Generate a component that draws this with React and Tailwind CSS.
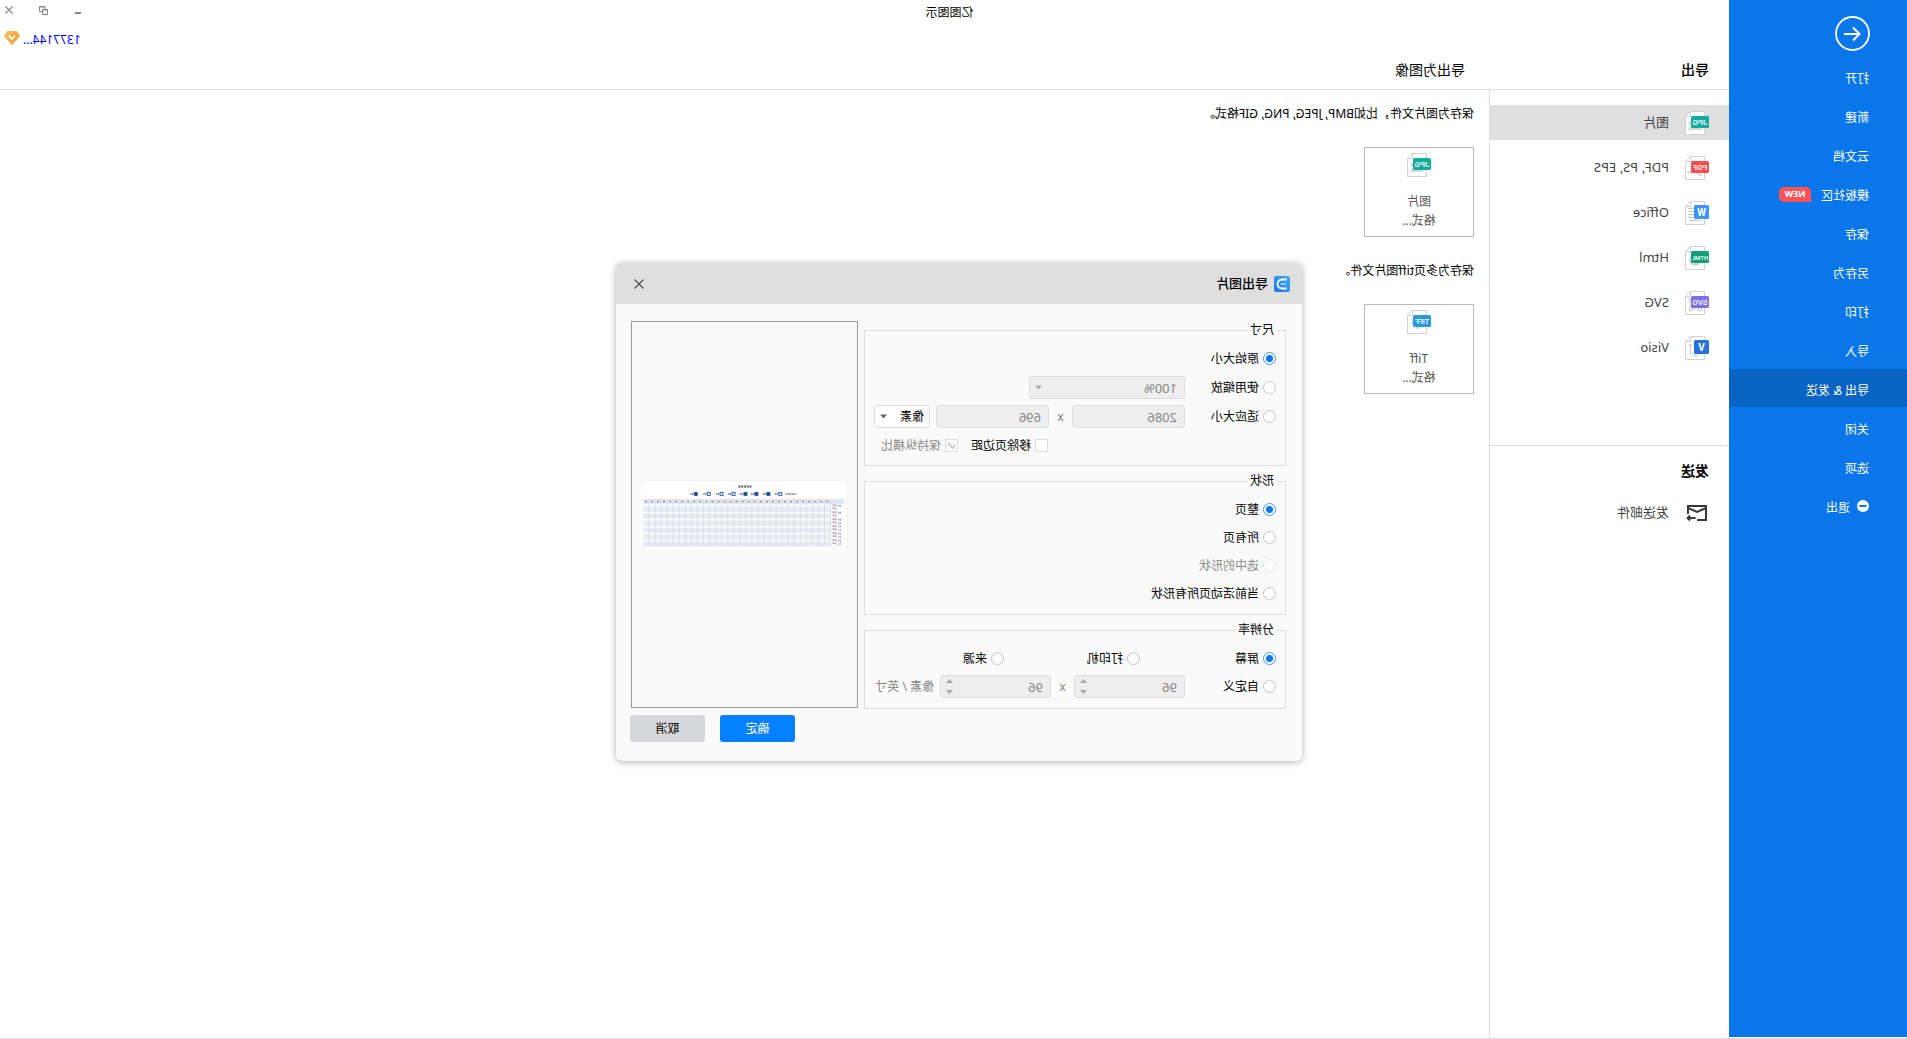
import React, { useState } from "react";
import clsx from "clsx";

const navItems = [
  { id: "open", name: "打开" },
  { id: "new", name: "新建" },
  { id: "cloud", name: "云文档" },
  { id: "community", name: "模板社区", badge: "NEW" },
  { id: "save", name: "保存" },
  { id: "saveAs", name: "另存为" },
  { id: "print", name: "打印" },
  { id: "import", name: "导入" },
  { id: "export", name: "导出 & 发送" },
  { id: "close", name: "关闭" },
  { id: "options", name: "选项" },
  { id: "exit", name: "退出", icon: true },
];

const exportTypes = [
  { id: "jpg", name: "图片" },
  { id: "pdf", name: "PDF, PS, EPS" },
  { id: "word", name: "Office" },
  { id: "html", name: "Html" },
  { id: "svg", name: "SVG" },
  { id: "visio", name: "Visio" },
];

const fileBadges = {
  jpg: { label: "JPG", color: "#12ab9d", size: 8 },
  pdf: { label: "PDF", color: "#ff4c4f", size: 8 },
  html: { label: "HTML", color: "#12a078", size: 6 },
  svg: { label: "SVG", color: "#7f6fe8", size: 8 },
  tiff: { label: "TIFF", color: "#2b99d8", size: 7 },
  word: { label: "W", color: "#3b94ff", size: 10, square: true },
  visio: { label: "V", color: "#2672d9", size: 10, square: true },
};

const FileIcon = ({ type }) => {
  const badge = fileBadges[type];
  return (
    <svg width="24" height="24" viewBox="0 0 24 24" className="shrink-0" aria-hidden="true">
      <path d="M4.5.5H18.500l5 5v18h-19z" fill="#fff" stroke="#d2d2d2" />
      <path d="M18.500.5v5h5" fill="none" stroke="#d2d2d2" />
      {type === "jpg" && (
        <g fill="#d6d6d6">
          <circle cx="18.500" cy="12" r="2" />
          <path d="M7 19l4-6 4 3 3-2 3 5z" />
        </g>
      )}
      {type === "pdf" && (
        <path d="M7 19c3 1 5-1 6-4 3 2 6 3 9 1-3 0-5-1-7-3-2 2-5 4-8 6z" fill="#d6d6d6" stroke="#d6d6d6" />
      )}
      {type === "word" && (
        <path d="M14 7.500h7M14 10.500h7M14 13.500h7M14 16.500h7M8 19.500h12" stroke="#c9c9c9" />
      )}
      {type === "html" && <circle cx="14" cy="14" r="6" fill="#d6d6d6" />}
      {type === "svg" && (
        <path d="M7.500 16.500h3v3h-3zM16.500 16.500h3v3h-3zM16.500 7.500h3v3h-3zM10.500 18h6M18 10.500v6" fill="none" stroke="#c9c9c9" />
      )}
      {type === "visio" && (
        <g fill="#d2d2d2" stroke="#d2d2d2">
          <path d="M18.500 8l1.500 1.500-1.500 1.500-1.500-1.500zM12 19h3v1h-3z" />
          <path d="M18.500 10v8h-3" fill="none" />
        </g>
      )}
      {type === "tiff" && (
        <g fill="#d6d6d6">
          <circle cx="14" cy="13" r="4.500" />
          <path d="M12.500 7h3v12h-3zM8 11.500h12v3H8z" />
          <path d="M12.500 7h3v12h-3z" transform="rotate(45 14 13)" />
        </g>
      )}
      {badge.square ? (
        <rect y="4" x="0" width="15" height="14" rx="1.500" fill={badge.color} />
      ) : (
        <rect y="5" x="0" width="18" height="12" rx="1.500" fill={badge.color} />
      )}
      <text
        x={badge.square ? 7.5 : 9}
        y={badge.square ? 14.5 : 13.5}
        fontSize={badge.size}
        fontWeight={badge.square ? 700 : 500}
        fontFamily="Roboto, sans-serif"
        textAnchor="middle"
        fill="#fff"
      >
        {badge.label}
      </text>
    </svg>
  );
};

const previewIcons = [
  { x: 68, filled: false },
  { x: 80, filled: true },
  { x: 92, filled: true },
  { x: 103, filled: true },
  { x: 115, filled: false },
  { x: 127, filled: false },
  { x: 140, filled: false },
  { x: 153, filled: true },
];

// Thumbnail of the attendance sheet that will be exported
const SheetPreview = () => (
  <svg viewBox="0 0 208 69" className="w-full" role="img" aria-label="预览">
    <rect width="208" height="69" fill="#fff" />
    <path d="M.5 69V.5H208" fill="none" stroke="#f2f2f2" />
    <path d="M97 6.500h14" stroke="#77777f" strokeWidth="2.400" strokeDasharray="2 .8" />
    <path d="M52 14h11" stroke="#8a8a98" strokeWidth="1.600" strokeDasharray="2 .5" />
    {previewIcons.map((icon) => (
      <g key={icon.x}>
        <rect
          x={icon.x - 1.5}
          y="12.500"
          width="3"
          height="3"
          fill={icon.filled ? "#243a70" : "#fff"}
          stroke="#2f62b5"
        />
        <path d={`M${icon.x + 2.500} 14h3`} stroke="#6a6a78" strokeWidth="1.600" strokeDasharray="1.300 .4" />
      </g>
    ))}
    <rect x="4" y="19" width="202" height="5.400" fill="#e3e8f5" />
    {[0, 1, 2, 3, 4, 5].map((row) => (
      <g key={row}>
        <rect x="17" y={26.8 + row * 7} width="189" height="4.600" fill="#e7ebf5" />
        <path d={`M7 ${26 + row * 7}h3`} stroke="#a29dc4" strokeWidth="1.600" strokeDasharray="1.200 .4" />
        {row > 1 && <path d={`M7 ${29.3 + row * 7}h3`} stroke="#a29dc4" strokeWidth="1.600" strokeDasharray="1.200 .4" />}
        <path d={`M12 ${25.5 + row * 7}h4M12 ${28.5 + row * 7}h4`} stroke="#b5a8b5" strokeWidth="1.800" strokeDasharray="1.600 .4" />
        <path d={`M4 ${31.400 + row * 7}h202`} stroke="#dedfe6" strokeWidth=".5" />
      </g>
    ))}
    {Array.from({ length: 31 }, (_, i) => (
      <g key={i}>
        <path d={`M${17.500 + i * 6.08} 19v47.400`} stroke="#d8d9df" strokeWidth=".8" />
        <path d={`M${19.700 + i * 6.08} 21.700h2`} stroke="#8b8bad" strokeWidth="1.500" />
      </g>
    ))}
    <path d="M11.500 24v42.400M4 19l13 5" stroke="#d8d9df" strokeWidth=".8" />
  </svg>
);

const Radio = ({ label, name, value, current, onChange, disabled }) => (
  <label
    className={clsx(
      "flex h-[23px] items-center gap-1 whitespace-nowrap",
      disabled ? "text-[#8a8a8a]" : "text-black"
    )}
  >
    <input
      type="radio"
      name={name}
      value={value}
      checked={current === value}
      disabled={disabled}
      onChange={() => onChange(value)}
      className="h-[13px] w-[13px] shrink-0 appearance-none rounded-full border border-[#c4c4c4] bg-white checked:border-[#3d93ee] checked:bg-[radial-gradient(circle,#0a76ec_3px,#ffffff_4px)] disabled:border-[#e4e4e4]"
    />
    {label}
  </label>
);

const Group = ({ title, children, className }) => (
  <fieldset className={clsx("min-w-0 border border-[#dcdcde] px-[9px] pt-2", className)}>
    <legend className="px-0.5 leading-[18px]">{title}</legend>
    {children}
  </fieldset>
);

const DropArrow = ({ className }) => (
  <svg width="7" height="5" viewBox="0 0 7 5" className={clsx("pointer-events-none absolute top-[9px] right-1.5", className)}>
    <path d="M0 .5h7L3.500 4.500z" fill="currentColor" />
  </svg>
);

const fieldClass =
  "h-[23px] w-full appearance-none rounded-[3px] border border-[#dcdcde] bg-[#eeeeee] px-[7px] text-[13px] leading-5 text-[#868686] opacity-100 outline-none";

const SpinBox = ({ label, value }) => (
  <div className="relative w-[111px]">
    <input type="number" aria-label={label} defaultValue={value} disabled className={clsx(fieldClass, "[&::-webkit-inner-spin-button]:appearance-none")} />
    <svg width="7" height="15" viewBox="0 0 7 15" className="pointer-events-none absolute top-1 right-1.5 text-[#a8a8a8]">
      <path d="M0 4L3.500 0 7 4zM0 11h7l-3.500 4z" fill="currentColor" />
    </svg>
  </div>
);

const ExportDialog = () => {
  const [size, setSize] = useState("original");
  const [shape, setShape] = useState("page");
  const [dpi, setDpi] = useState("screen");

  return (
    <div
      role="dialog"
      aria-labelledby="dialog-title"
      className="w-[686px] rounded-md bg-[#fafafa] text-xs shadow-[0_1px_7px_rgba(0,0,0,0.32)]"
    >
      <div className="flex h-[41px] items-center rounded-t-md bg-[#dfdfdf] px-3">
        <svg width="16" height="16" viewBox="0 0 16 16" aria-hidden="true">
          <defs>
            <linearGradient id="logo" x1="0" y1="0" x2="1" y2="1">
              <stop offset="0" stopColor="#4aa8ff" />
              <stop offset="1" stopColor="#1676f5" />
            </linearGradient>
          </defs>
          <rect width="16" height="16" rx="2" fill="url(#logo)" />
          <path d="M3.500 3.500h4.300c2.900 0 4.700 2 4.700 4.500s-1.800 4.500-4.700 4.500H3.500" fill="none" stroke="#fff" strokeWidth="1.800" />
          <path d="M4 8h5.500" stroke="#b9dcff" strokeWidth="1.500" />
        </svg>
        <h2 id="dialog-title" className="ml-1.5 text-[13px] font-medium">导出图片</h2>
        <button type="button" aria-label="关闭" className="mr-1.5 ml-auto">
          <svg width="10" height="10" viewBox="0 0 10 10">
            <path d="M.5.5l9 9M9.500.5l-9 9" stroke="#444" strokeWidth="1.100" />
          </svg>
        </button>
      </div>

      <div className="flex gap-1.5 pt-[17px] pr-[15px] pl-4">
        <div className="flex flex-1 flex-col gap-1.5">
          <Group title="尺寸" className="pb-2">
            <div className="grid grid-cols-[91px_1fr] gap-y-1.5">
              <div className="col-span-2">
                <Radio label="原始大小" name="size" value="original" current={size} onChange={setSize} />
              </div>
              <Radio label="使用缩放" name="size" value="scale" current={size} onChange={setSize} />
              <div className="relative w-[156px]">
                <select aria-label="缩放" disabled className={fieldClass}>
                  <option>100%</option>
                </select>
                <DropArrow className="text-[#a8a8a8]" />
              </div>
              <Radio label="适应大小" name="size" value="fit" current={size} onChange={setSize} />
              <div className="flex items-center">
                <input type="text" aria-label="宽度" defaultValue="2086" disabled className={clsx(fieldClass, "max-w-[113px]")} />
                <span className="w-[23px] shrink-0 text-center text-[#777]">x</span>
                <input type="text" aria-label="高度" defaultValue="696" disabled className={clsx(fieldClass, "max-w-[113px]")} />
                <div className="relative ml-1.5 w-14 shrink-0">
                  <select
                    aria-label="单位"
                    className="h-[23px] w-full appearance-none rounded-[3px] border border-[#dcdcde] bg-white pl-[5px] text-xs outline-none"
                  >
                    <option>像素</option>
                    <option>英寸</option>
                  </select>
                  <DropArrow className="text-[#666]" />
                </div>
              </div>
              <div className="col-span-2 flex h-[23px] items-center justify-end gap-[13px] pr-[7px]">
                <label className="flex items-center gap-1">
                  <input type="checkbox" className="h-[13px] w-[13px] appearance-none border border-[#dcdcde] bg-white" />
                  移除页边距
                </label>
                <label className="relative flex items-center gap-1 text-[#8a8a8a]">
                  <input type="checkbox" defaultChecked disabled className="h-[13px] w-[13px] appearance-none border border-[#dcdcde] bg-[#fafafa]" />
                  <svg width="13" height="13" viewBox="0 0 13 13" className="pointer-events-none absolute left-0">
                    <path d="M3 6l2.500 3L10 3.500" fill="none" stroke="#c4c4c4" strokeWidth="1.500" />
                  </svg>
                  保持纵横比
                </label>
              </div>
            </div>
          </Group>

          <Group title="形状" className="pb-[9px]">
            <div className="flex flex-col items-start gap-[5px]">
              <Radio label="整页" name="shape" value="page" current={shape} onChange={setShape} />
              <Radio label="所有页" name="shape" value="all" current={shape} onChange={setShape} />
              <Radio label="选中的形状" name="shape" value="selected" current={shape} onChange={setShape} disabled />
              <Radio label="当前活动页所有形状" name="shape" value="active" current={shape} onChange={setShape} />
            </div>
          </Group>

          <Group title="分辨率" className="pb-[10px]">
            <div className="grid grid-cols-[136px_136px_1fr]">
              <Radio label="屏幕" name="dpi" value="screen" current={dpi} onChange={setDpi} />
              <Radio label="打印机" name="dpi" value="printer" current={dpi} onChange={setDpi} />
              <Radio label="来源" name="dpi" value="source" current={dpi} onChange={setDpi} />
            </div>
            <div className="mt-[5px] grid grid-cols-[91px_1fr]">
              <Radio label="自定义" name="dpi" value="custom" current={dpi} onChange={setDpi} />
              <div className="flex items-center text-[#868686]">
                <SpinBox label="水平分辨率" value={96} />
                <span className="w-[23px] shrink-0 text-center">x</span>
                <SpinBox label="垂直分辨率" value={96} />
                <span className="ml-1.5 whitespace-nowrap">像素 / 英寸</span>
              </div>
            </div>
          </Group>
        </div>

        <div className="mb-px flex w-[227px] items-center border border-[#9b9b9b] px-[9px]">
          <SheetPreview />
        </div>
      </div>

      <div className="flex justify-end gap-[15px] pt-1.5 pr-3.5 pb-[19px]">
        <button type="button" className="h-[27px] w-[75px] rounded-[3px] bg-[#0280ff] text-white">
          确定
        </button>
        <button type="button" className="h-[27px] w-[75px] rounded-[3px] bg-[#d5d7db] text-black">
          取消
        </button>
      </div>
    </div>
  );
};

const Sidebar = () => (
  <nav className="mb-px w-[178px] shrink-0 bg-[#0a76ec] text-xs text-white">
    <div className="h-[57px] pt-4 pl-[37px]">
      <button type="button" aria-label="返回" className="block">
        <svg width="35" height="35" viewBox="0 0 35 35" fill="none" stroke="#fff">
          <circle cx="17.500" cy="17.500" r="16.500" strokeWidth="1.800" />
          <path d="M26 18H11M17 11.500L10.500 18l6.500 6.500" strokeWidth="2" />
        </svg>
      </button>
    </div>
    <ul className="flex flex-col gap-px">
      {navItems.map((item) => (
        <li key={item.id}>
          <button
            type="button"
            className={clsx(
              "flex h-[38px] w-full items-center pt-1.5 pl-[38px]",
              item.id === "export" && "bg-[#0864c4]"
            )}
          >
            {item.icon && (
              <svg width="12" height="12" viewBox="0 0 12 12" className="mr-[7px] mb-1" aria-hidden="true">
                <circle cx="6" cy="6" r="6" fill="#fff" />
                <path d="M2.500 6h7" stroke="#0a76ec" strokeWidth="2" />
              </svg>
            )}
            {item.name}
            {item.badge && (
              <span className="mb-1 ml-2.5 flex h-[15px] w-8 items-center justify-center rounded-t-[5px] rounded-br-[5px] bg-[#ff5257] text-[9px] font-bold">
                {item.badge}
              </span>
            )}
          </button>
        </li>
      ))}
    </ul>
  </nav>
);

const FormatCard = ({ type, name }) => (
  <button
    type="button"
    className="mt-6 flex h-[90px] w-[110px] flex-col items-center border border-[#b9b9b9] pt-[5px] leading-[19px] text-[#555]"
  >
    <FileIcon type={type} />
    <span className="mt-[15px]">{name}</span>
    <span>格式...</span>
  </button>
);

const App = () => {
  const [activeType, setActiveType] = useState("jpg");

  return (
    <div className="relative flex min-h-screen -scale-x-100 border-b border-[#dedede] bg-white font-['Noto_Sans','Noto_Sans_CJK_SC',sans-serif] text-xs text-black [font-kerning:none]">
      <Sidebar />

      <div className="flex flex-1 flex-col">
        {/* window buttons */}
        <div className="flex h-5 items-center justify-end gap-[26px] pr-[5px] text-[#888]">
          <button type="button" aria-label="最小化">
            <svg width="8" height="8" viewBox="0 0 8 8">
              <path d="M1 7h6" stroke="currentColor" strokeWidth="2" />
            </svg>
          </button>
          <button type="button" aria-label="还原">
            <svg width="9" height="9" viewBox="0 0 9 9" fill="none" stroke="currentColor">
              <path d="M.5 3.500h5v5h-5zM3 3V.5h5.500v5H6M.5 4h5M3 1h5.500" />
            </svg>
          </button>
          <button type="button" aria-label="关闭窗口">
            <svg width="8" height="8" viewBox="0 0 8 8">
              <path d="M.5.5l7 7M7.500.5l-7 7" stroke="currentColor" strokeWidth="1.200" />
            </svg>
          </button>
        </div>

        <div className="flex h-10 items-center justify-end gap-[3px] pr-1">
          <a href="#account" className="text-[#0000ff]">1377144...</a>
          <svg width="16" height="14" viewBox="0 0 16 14" className="mb-1" aria-hidden="true">
            <path d="M3.500 0h9L16 5l-8 9-8-9z" fill="#f2a93f" />
            <path d="M3.500 0h9L16 5l-4 4.500L8 3z" fill="#f7bb5c" />
            <path d="M5 4.500l3 3.500 3-3.500" fill="none" stroke="#fff" strokeWidth="1.700" />
          </svg>
        </div>

        <div className="flex pb-[9px] text-sm leading-5">
          <h2 className="w-60 pl-5 font-medium">导出</h2>
          <h1 className="pl-6">导出为图像</h1>
        </div>

        <div className="flex flex-1 border-t border-[#dedede]">
          <aside className="w-60 shrink-0 border-r border-[#dedede] pt-[15px] text-[13px] text-[#444]">
            <ul className="flex flex-col gap-2.5">
              {exportTypes.map((type) => (
                <li key={type.id}>
                  <button
                    type="button"
                    onClick={() => setActiveType(type.id)}
                    className={clsx(
                      "flex h-[35px] w-full items-center gap-4 pl-5",
                      activeType === type.id && "bg-[#dfdfdf]"
                    )}
                  >
                    <FileIcon type={type.id} />
                    {type.name}
                  </button>
                </li>
              ))}
            </ul>
            <div className="mt-20 border-t border-[#dedede] pt-[15px]">
              <h2 className="pl-5 text-sm leading-5 font-bold text-black">发送</h2>
              <button type="button" className="mt-3.5 flex h-[35px] w-full items-center gap-4 pl-5">
                <svg width="24" height="18" viewBox="0 0 24 18" fill="none" stroke="#3a3a3a" strokeWidth="2" aria-hidden="true">
                  <path d="M12 16H3V2h18v8" />
                  <path d="M3 4l9 4 9-4" />
                  <path d="M13.500 14H21M19 11.500l2.500 2.500-2.500 2.500" strokeWidth="1.800" />
                </svg>
                发送邮件
              </button>
            </div>
          </aside>

          <main className="flex-1 pt-[15px] pl-[15px] leading-[18px]">
            <p>保存为图片文件，比如BMP, JPEG, PNG, GIF格式。</p>
            <FormatCard type="jpg" name="图片" />
            <p className="mt-[25px]">保存为多页tiff图片文件。</p>
            <FormatCard type="tiff" name="Tiff" />
          </main>
        </div>
      </div>

      <div className="pointer-events-none absolute inset-x-0 top-0 pt-px pl-2 text-center leading-6">亿图图示</div>

      <div className="absolute inset-0 flex items-center justify-center pr-[11px] pb-[14px]">
        <ExportDialog />
      </div>
    </div>
  );
};

export default App;
